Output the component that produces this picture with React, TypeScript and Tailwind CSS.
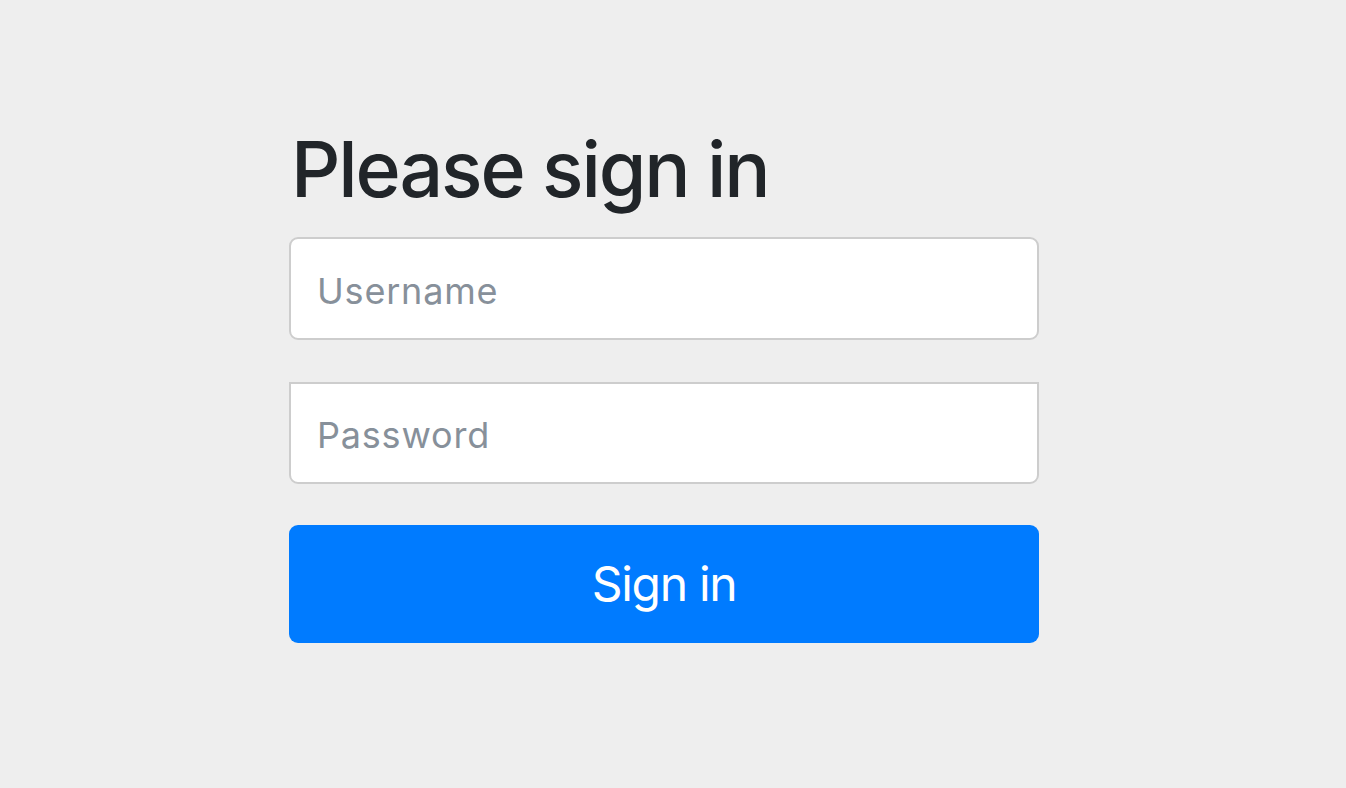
export default function App() {
  return (
    <div className="min-h-screen bg-[#eeeeee] pt-[131px] pl-[289px] font-['Inter',sans-serif]">
      <form className="w-[750px]" onSubmit={(e) => e.preventDefault()}>
        <h2 className="text-[77px] leading-none font-medium text-[#212529] tracking-[-2.1px] mb-[29px] pl-[2px]">
          Please sign in
        </h2>
        <input
          type="text"
          placeholder="Username"
          className="block w-full h-[103px] bg-white border-2 border-[#cdcdcd] rounded-[9px] px-[26px] pt-[4px] text-[36px] tracking-[0.8px] text-[#495057] placeholder:text-[#87909a] outline-none"
        />
        <input
          type="password"
          placeholder="Password"
          className="block w-full h-[102px] mt-[42px] bg-white border-2 border-[#cdcdcd] rounded-b-[9px] px-[26px] pt-[4px] text-[36px] tracking-[0.8px] text-[#495057] placeholder:text-[#87909a] outline-none"
        />
        <button
          type="submit"
          className="block w-full h-[118px] mt-[41px] bg-[#007bff] text-white rounded-[9px] text-[48px] tracking-[-1.3px] leading-none"
        >
          Sign in
        </button>
      </form>
    </div>
  );
}
